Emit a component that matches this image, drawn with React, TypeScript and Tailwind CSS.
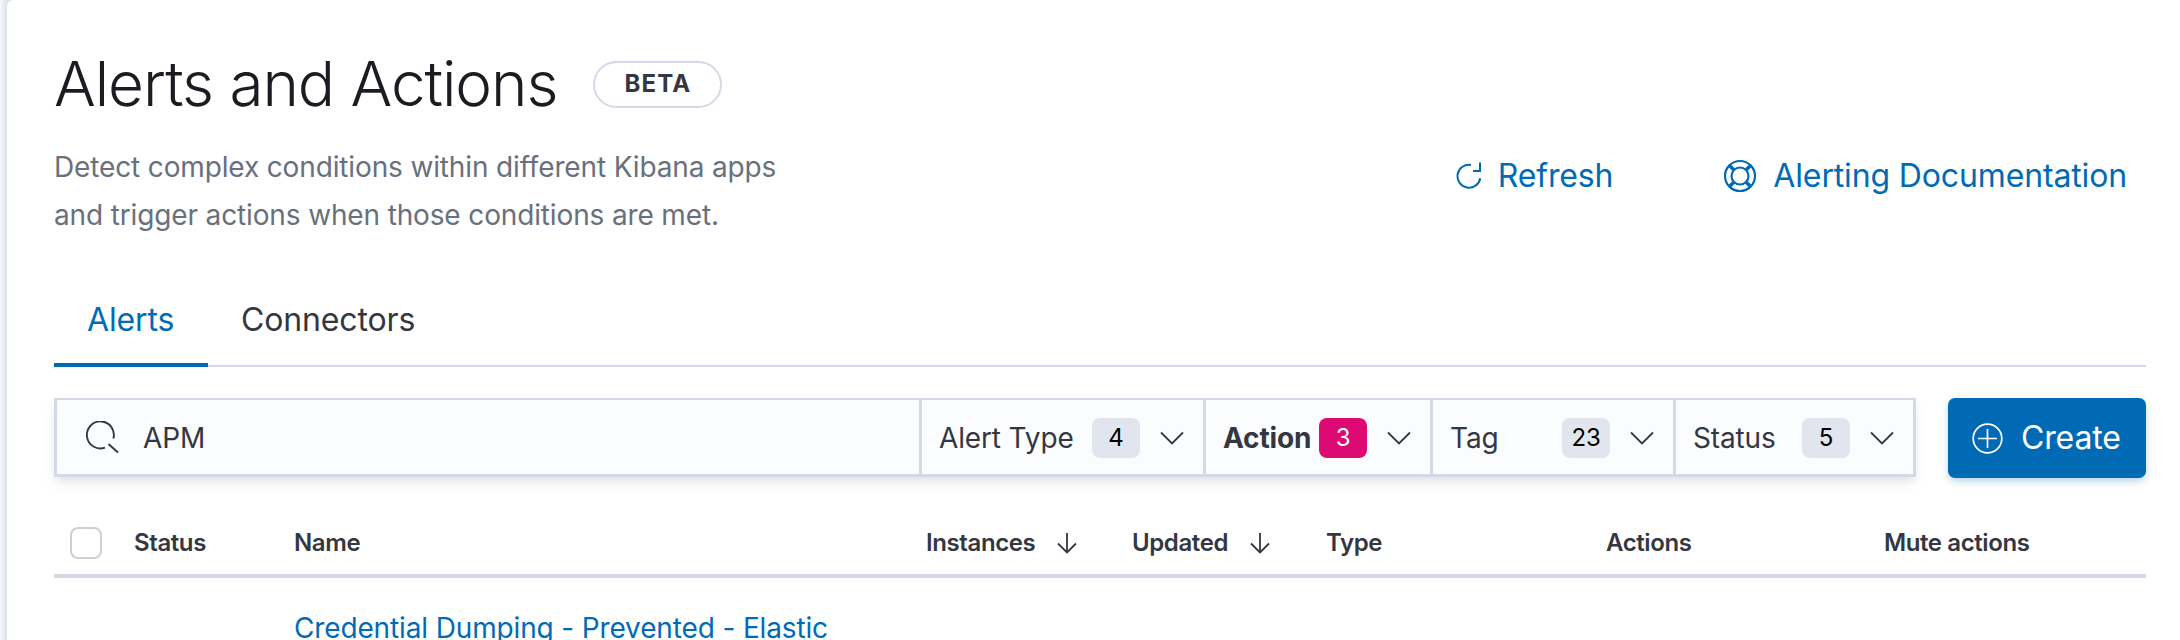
import React from 'react';

type Filter = { label: string; count: string; active?: boolean; width: string };

const filters: Filter[] = [
  { label: 'Alert Type', count: '4', width: 'w-[284px]' },
  { label: 'Action', count: '3', active: true, width: 'w-[227px]' },
  { label: 'Tag', count: '23', width: 'w-[243px]' },
  { label: 'Status', count: '5', width: 'w-[240px]' },
];

const Chevron = () => (
  <svg className="ml-[20px] shrink-0 text-[#343741]" width="24" height="14" viewBox="0 0 24 14" fill="none" stroke="currentColor" strokeWidth="1.8">
    <path d="M1 1.5 L12 12.5 L23 1.5" />
  </svg>
);

const SortArrow = () => (
  <svg className="ml-[21px] shrink-0" width="22" height="22" viewBox="0 0 22 22" fill="none" stroke="currentColor" strokeWidth="1.8">
    <path d="M11 1 V20.5 M2 11.5 L11 20.5 L20 11.5" />
  </svg>
);

const SearchIcon = () => (
  <svg className="shrink-0 text-[#343741]" width="33" height="33" viewBox="0 0 33 33" fill="none" stroke="currentColor" strokeWidth="1.9">
    <path d="M27.4 17.5 A13.5 13.5 0 1 0 19 26.6 M22.5 23 L32 31.5" />
  </svg>
);

const RefreshIcon = () => (
  <svg className="shrink-0" width="26" height="27" viewBox="0 0 26 27" fill="none" stroke="currentColor" strokeWidth="2">
    <path d="M15 2.9 A11.5 11.5 0 1 0 24.3 16.3 M24 0.5 V9 H17" />
  </svg>
);

const LifeRingIcon = () => (
  <svg className="shrink-0" width="34" height="34" viewBox="0 0 34 34" fill="none" stroke="currentColor">
    <circle cx="17" cy="17" r="15" strokeWidth="2.2" />
    <circle cx="17" cy="17" r="8.5" strokeWidth="2.2" />
    <path d="M6.5 6.5 L11 11 M27.5 6.5 L23 11 M6.5 27.5 L11 23 M27.5 27.5 L23 23" strokeWidth="3.6" />
  </svg>
);

const PlusCircleIcon = () => (
  <svg className="shrink-0" width="31" height="31" viewBox="0 0 31 31" fill="none" stroke="currentColor" strokeWidth="1.7">
    <circle cx="15.5" cy="15.5" r="14.3" />
    <path d="M15.5 6 V25 M6 15.5 H25" />
  </svg>
);

const FilterButton: React.FC<{ filter: Filter }> = ({ filter }) => (
  <div className={`${filter.width} flex items-center pl-[17px] pr-[19px] pt-[1px] border-l-[3px] border-[#D3DAE6] shrink-0`}>
    <span className={`flex-1 text-[28px] ${filter.active ? 'font-bold' : 'font-normal'} text-[#343741]`}>{filter.label}</span>
    <span
      className={`w-[48px] h-[40px] rounded-[8px] flex items-center justify-center text-[24px] ${
        filter.active ? 'bg-[#DD0A73] text-white' : 'bg-[#E0E5EE] text-black'
      }`}
    >
      {filter.count}
    </span>
    <Chevron />
  </div>
);

const SortHeader: React.FC<{ label: string; width: string }> = ({ label, width }) => (
  <div className={`${width} flex items-center shrink-0`}>
    {label}
    <SortArrow />
  </div>
);

const App: React.FC = () => {
  return (
    <div
      className="w-[2180px] h-[640px] overflow-hidden bg-[linear-gradient(to_right,#F8F9FB,#DCE1EC_7px)] pl-[7px] tracking-[-0.14px]"
      style={{ fontFamily: 'Inter, "Noto Sans", sans-serif' }}
    >
      <div className="h-full w-[2173px] bg-white rounded-tl-[6px] pl-[47px] pr-[34px] pt-[50px]">
        <div className="flex justify-between">
          <div>
            <div className="flex items-center h-[68px]">
              <h1 className="text-[62px] leading-[68px] font-light text-[#1A1C21] tracking-[-1.05px]">Alerts and Actions</h1>
              <span className="ml-[36px] w-[129px] h-[47px] rounded-full border-2 border-[#D3DAE6] flex items-center justify-center text-[24px] font-bold tracking-[1.2px] text-[#343741]">
                BETA
              </span>
            </div>
            <p className="mt-[25px] text-[28px] leading-[48px] text-[#69707D]">
              Detect complex conditions within different Kibana apps
              <br />
              and trigger actions when those conditions are met.
            </p>
          </div>
          <div className="flex items-center gap-[110px] pt-[62px] pr-[19px] text-[32px] text-[#006BB4]">
            <a className="flex items-center gap-[16px]">
              <RefreshIcon />
              Refresh
            </a>
            <a className="flex items-center gap-[16px]">
              <LifeRingIcon />
              Alerting Documentation
            </a>
          </div>
        </div>

        <div className="mt-[44px] flex border-b-2 border-[#D3DAE6] h-[84px] text-[32px]">
          <div className="w-[154px] h-[84px] pl-[33px] pt-[13px] border-b-4 border-[#006BB4] text-[#006BB4]">Alerts</div>
          <div className="pl-[33px] pt-[13px] text-[#343741]">Connectors</div>
        </div>

        <div className="mt-[31px] flex items-start">
          <div className="w-[1862px] h-[79px] flex bg-[#FBFCFD] border-[3px] border-[#D3DAE6] border-t-2 shadow-[0_6px_10px_-2px_rgba(152,162,179,0.35)]">
            <div className="flex-1 flex items-center pl-[29px] pt-[1px]">
              <SearchIcon />
              <span className="ml-[24px] text-[28px] text-[#343741]">APM</span>
            </div>
            {filters.map((filter) => (
              <FilterButton key={filter.label} filter={filter} />
            ))}
          </div>
          <button className="ml-[32px] w-[198px] h-[80px] rounded-[7px] bg-[#006BB4] text-white text-[32px] flex items-center pl-[24px] gap-[18px] shadow-[0_4px_8px_-1px_rgba(0,107,180,0.3)]">
            <PlusCircleIcon />
            Create
          </button>
        </div>

        <div className="mt-[33px] flex items-center h-[67px] border-b-4 border-[#D3DAE6] text-[24px] font-semibold text-[#343741] tracking-[-0.4px]">
          <div className="w-[80px] pl-[16px] shrink-0">
            <div className="w-[32px] h-[32px] rounded-[8px] bg-white border-2 border-[#CDCFD4]" />
          </div>
          <div className="w-[160px] shrink-0">Status</div>
          <div className="w-[632px] shrink-0">Name</div>
          <SortHeader label="Instances" width="w-[206px]" />
          <SortHeader label="Updated" width="w-[194px]" />
          <div className="w-[280px] shrink-0">Type</div>
          <div className="w-[278px] shrink-0">Actions</div>
          <div className="shrink-0">Mute actions</div>
        </div>

        <div className="pl-[240px] pt-[29px] text-[28px] text-[#006BB4]">Credential Dumping - Prevented - Elastic</div>
      </div>
    </div>
  );
};

export default App;
